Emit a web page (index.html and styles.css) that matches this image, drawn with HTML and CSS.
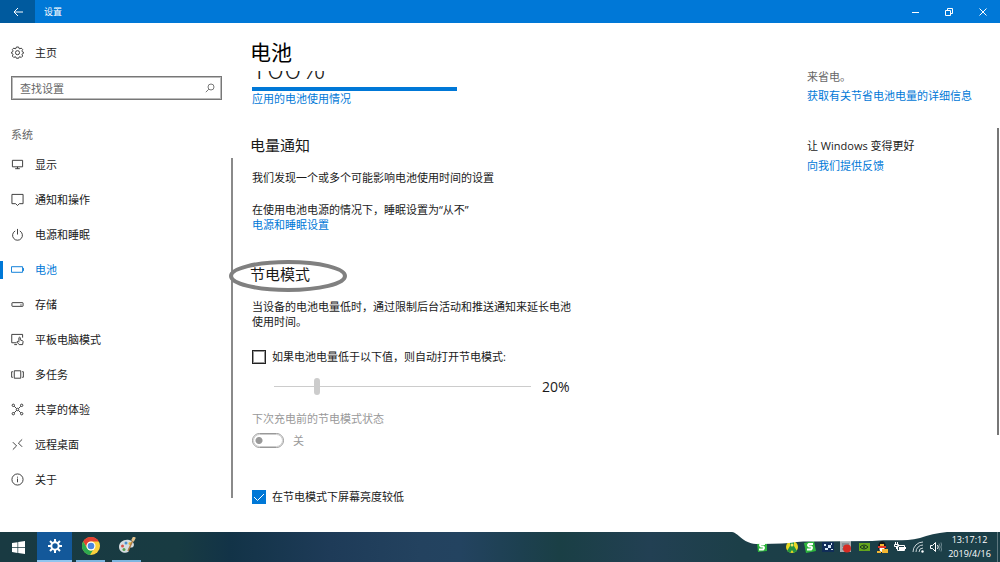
FILE: index.html
```
<!DOCTYPE html>
<html lang="zh-CN">
<head>
    <meta charset="UTF-8">
    <meta name="viewport" content="width=device-width, initial-scale=1.0">
    <title>设置</title>
    <link rel="stylesheet" href="styles.css">
</head>
<body>

<header class="titlebar">
    <button class="back" aria-label="返回">
        <svg width="10" height="10" viewBox="0 0 10 10"><path d="M10 5H1M5 1L1 5l4 4"/></svg>
    </button>
    <span class="window-title">设置</span>
    <button class="window-button" aria-label="最小化">
        <svg width="10" height="10" viewBox="0 0 10 10"><path d="M2 5.500h7"/></svg>
    </button>
    <button class="window-button" aria-label="还原">
        <svg width="10" height="10" viewBox="0 0 10 10"><path d="M1.500 3.500h5v5h-5zM3.500 3.500v-2h5v5h-2"/></svg>
    </button>
    <button class="window-button" aria-label="关闭">
        <svg width="10" height="10" viewBox="0 0 10 10"><path d="M1.500 1.500l7 7M8.500 1.500l-7 7"/></svg>
    </button>
</header>

<div class="window">
    <div class="sidebar">
        <div class="sidebar-body">
            <a class="nav-item home" href="#">
                <svg class="icon" viewBox="0 0 14 14"><path d="M5.800 1.100h2.400l.4 1.500 1 .4 1.400-.8 1.600 1.700-.8 1.300.4 1 1.100.3v1.500l-1.100.4-.4 1 .8 1.400-1.600 1.600-1.400-.8-1 .4-.4 1.200H5.800l-.4-1.200-1-.4-1.400.8-1.600-1.600.8-1.400-.4-1L.7 8V6.500l1.100-.3.4-1-.8-1.300L3 2.200l1.400.8 1-.4z"/><circle cx="7" cy="7.200" r="2.200"/></svg>
                主页
            </a>
            <div class="search">
                <input type="text" placeholder="查找设置" aria-label="查找设置">
                <svg width="10" height="10" viewBox="0 0 10 10"><circle cx="6" cy="4" r="3"/><path d="M3.800 6.200L.8 9.200"/></svg>
            </div>
            <h2 class="group">系统</h2>
            <nav>
                <a class="nav-item" href="#">
                    <svg class="icon" viewBox="0 0 14 14"><path d="M1.500 2.500h11v7h-11zM7 9.500v2M4.500 11.500h5"/></svg>
                    显示
                </a>
                <a class="nav-item" href="#">
                    <svg class="icon" viewBox="0 0 14 14"><path d="M1 1.500h12v10H9l-2 2-2-2H1z"/></svg>
                    通知和操作
                </a>
                <a class="nav-item" href="#">
                    <svg class="icon" viewBox="0 0 14 14"><path d="M4.500 3.200a5.300 5.300 0 1 0 5 0M7 1v6"/></svg>
                    电源和睡眠
                </a>
                <a class="nav-item active" href="#">
                    <svg class="icon" viewBox="0 0 14 14"><path d="M.5 4h12v6H.5zM13.500 5.500v3"/></svg>
                    电池
                </a>
                <a class="nav-item" href="#">
                    <svg class="icon" viewBox="0 0 14 14"><path d="M1.500 5h11q.5 0 .5.500v3q0 .5-.5.500h-11Q1 9 1 8.500v-3Q1 5 1.500 5zM10 7.500h1.500"/></svg>
                    存储
                </a>
                <a class="nav-item" href="#">
                    <svg class="icon" viewBox="0 0 14 14"><path d="M6 10.500H.8v-9h11.700V5M3.500 12.500h3"/><path d="M8.500 9.500V5q.8-1 1.500 0v2.500l2.500.8q.6.4.5 1.200l-.5 3H8.800L6.500 9.800q0-1 1-.8l1 1"/></svg>
                    平板电脑模式
                </a>
                <a class="nav-item" href="#">
                    <svg class="icon" viewBox="0 0 14 14"><path d="M3.500 3h7v8h-7zM2 4H.7v6H2M12 4h1.300v6H12"/></svg>
                    多任务
                </a>
                <a class="nav-item" href="#">
                    <svg class="icon" viewBox="0 0 14 14"><circle cx="2.500" cy="2.500" r="1.300"/><circle cx="11.500" cy="2.500" r="1.300"/><circle cx="2.500" cy="11.500" r="1.300"/><circle cx="11.500" cy="11.500" r="1.300"/><circle cx="7" cy="7" r="1.300"/><path d="M3.500 3.500L6 6M10.500 3.500L8 6M3.500 10.500L6 8M10.500 10.500L8 8"/></svg>
                    共享的体验
                </a>
                <a class="nav-item" href="#">
                    <svg class="icon" viewBox="0 0 14 14"><path d="M2 4.500l4 4-4 4M12 1.500l-4 4 4 4"/></svg>
                    远程桌面
                </a>
                <a class="nav-item" href="#">
                    <svg class="icon" viewBox="0 0 14 14"><circle cx="7" cy="7" r="6"/><path d="M7 6v4M7 4v1"/></svg>
                    关于
                </a>
            </nav>
        </div>
        <div class="sidebar-scroll"></div>
    </div>

    <main class="content">
        <h1>电池</h1>
        <div class="scroll-area">
            <div class="charge">100%</div>
            <div class="charge-bar"></div>
            <a href="#">应用的电池使用情况</a>

            <h2>电量通知</h2>
            <p>我们发现一个或多个可能影响电池使用时间的设置</p>
            <p class="spaced">在使用电池电源的情况下，睡眠设置为“从不”</p>
            <a href="#">电源和睡眠设置</a>

            <h2 class="saver-title">节电模式
                <svg class="marker" viewBox="0 0 120 34"><ellipse cx="60" cy="17" rx="57" ry="14"/></svg>
            </h2>
            <p>当设备的电池电量低时，通过限制后台活动和推送通知来延长电池使用时间。</p>

            <label class="check auto-check"><input type="checkbox">如果电池电量低于以下值，则自动打开节电模式:</label>
            <div class="slider">
                <input type="range" id="level" min="5" max="100" value="20" aria-label="电池电量" disabled>
                <output for="level">20%</output>
            </div>

            <label class="saver-label" for="saver">下次充电前的节电模式状态</label>
            <div class="toggle">
                <input type="checkbox" id="saver" role="switch" disabled>
                <span>关</span>
            </div>

            <label class="check dim-check"><input type="checkbox" checked>在节电模式下屏幕亮度较低</label>
        </div>
    </main>

    <aside class="related">
        <p class="muted">来省电。</p>
        <a href="#">获取有关节省电池电量的详细信息</a>
        <h3>让 Windows 变得更好</h3>
        <a href="#">向我们提供反馈</a>
    </aside>
    <div class="page-scroll"></div>
</div>

<footer class="taskbar">
    <button class="task start" aria-label="开始">
        <svg width="13" height="13" viewBox="0 0 13 13"><path fill="#fff" d="M0 2l5.500-.8v5H0zM6.200 1.100L13 0v6.200H6.200zM0 6.900h5.500v5L0 11.100zM6.200 6.900H13V13l-6.800-1z"/></svg>
    </button>
    <button class="task current" aria-label="设置">
        <svg width="14" height="14" viewBox="0 0 14 14"><circle cx="7" cy="7" r="3.700" fill="none" stroke="#fff" stroke-width="2"/><path stroke="#fff" stroke-width="2" d="M7 0v3M7 11v3M0 7h3M11 7h3M2 2l2.200 2.200M9.800 9.800L12 12M12 2L9.800 4.200M4.200 9.800L2 12"/></svg>
    </button>
    <button class="task running" aria-label="Chrome">
        <svg width="18" height="18" viewBox="0 0 18 18"><circle cx="9" cy="9" r="9" fill="#fbd13d"/><path fill="#e34133" d="M1.200 4.500a9 9 0 0 1 15.600 0H9a4.500 4.500 0 0 0-4 6.500z"/><path fill="#2da94f" d="M1.200 4.500L5.100 11.200A4.500 4.500 0 0 0 11 13l-3 5A9 9 0 0 1 1.200 4.500z"/><circle cx="9" cy="9" r="4.500" fill="#fff"/><circle cx="9" cy="9" r="3.300" fill="#4a86e0"/></svg>
    </button>
    <button class="task running" aria-label="画图">
        <svg width="18" height="18" viewBox="0 0 18 18"><path fill="#d5dce0" d="M1 10C1 5 6 2 11 3c5 1 6 5 4 7-1 1-3 0-4 1s1 3-1 4c-3 2-9 0-9-5z"/><circle cx="4.500" cy="9" r="1.500" fill="#d9534a"/><circle cx="8" cy="6" r="1.500" fill="#4a90d0"/><circle cx="6" cy="12.500" r="1.500" fill="#55a04f"/><circle cx="12" cy="6.500" r="1.500" fill="#e6b83b"/><path stroke="#ad7b45" stroke-width="1.500" d="M10 14l5-11"/><path stroke="#e3c48e" stroke-width="3" d="M14.500 4L16.500 0"/></svg>
    </button>

    <div class="tray">
        <svg class="first" viewBox="0 0 12 12"><path fill="#2db53c" d="M1 2l10-1v9L2 11z"/><path fill="none" stroke="#fff" stroke-width="2" d="M9 3H5q-2 1 0 2.500h2q2 1 0 3H3"/></svg>
        <svg viewBox="0 0 12 12"><circle cx="6" cy="6" r="6" fill="#e9d822"/><path fill="#239342" d="M4 0h4v5l3 5-3 2-2-3-2 3-3-2 3-5z"/><circle cx="6" cy="4" r="1.500" fill="#f1e968"/></svg>
        <svg viewBox="0 0 12 12"><path fill="#2db53c" d="M0 2l10-2 2 10-10 2z"/><path fill="none" stroke="#fff" stroke-width="2" d="M9 3H5q-2 1 0 2.500h2q2 1 0 3H3"/></svg>
        <svg viewBox="0 0 12 12"><path fill="#102d58" d="M0 1h12v10H0z"/><path fill="#d4e7f6" d="M2 3h2v2H2zM6 4h3v3H6zM3 7h3v2H3zM9 2h1v2H9zM9 8h2v1H9z"/></svg>
        <svg viewBox="0 0 12 12"><path fill="#a9afb1" d="M0 0h11v11H0z"/><path stroke="#626d75" d="M2 3h7M2 5h5M2 8h3"/><circle cx="7" cy="7.500" r="4" fill="#d52b23"/></svg>
        <svg viewBox="0 0 12 12"><path fill="#64a51d" d="M1 2h11v8H1z"/><path fill="none" stroke="#17351f" d="M2 6q4-4 8 0-4 4-8 0z"/><circle cx="6" cy="6" r="1" fill="#17351f"/></svg>
        <svg viewBox="0 0 12 12"><ellipse cx="6" cy="6" rx="4" ry="6" fill="#15191b"/><ellipse cx="6" cy="8" rx="2.500" ry="3" fill="#fff"/><path fill="#e73828" d="M2 5h8v2H2z"/><path fill="#f4b731" d="M4 3h4v2H4zM1 10h4v2H1zM6 8h6v4H6z"/></svg>
        <svg viewBox="0 0 12 12"><path fill="none" stroke="#fff" d="M3.500 4.500h7v5h-7zM11.500 6v2M1.500 1v2M3.500 1v2M.5 3.500h4v2h-4zM2.500 5.500V8"/><path fill="#fff" d="M5 6h5v3H5z"/></svg>
        <svg viewBox="0 0 12 12"><path fill="none" stroke="#cbd6d9" d="M1 11A10 10 0 0 1 11 1M4 11a7 7 0 0 1 7-7M7 11a4 4 0 0 1 4-4"/><circle cx="10.500" cy="10.500" r="1.200" fill="#fff"/></svg>
        <svg viewBox="0 0 12 12"><path fill="none" stroke="#fff" d="M.5 4.500h2l3-3v9l-3-3h-2zM7.500 4q1.500 2 0 4"/><path fill="none" stroke="#6f8a91" d="M9 2.500q2.500 3.500 0 7M11 1.500q2 4.500 0 9"/></svg>
    </div>
    <div class="clock"><time>13:17:12</time><time>2019/4/16</time></div>
    <div class="show-desktop"></div>

    <svg class="paint" viewBox="0 0 215 13"><path d="M0 0C7 1 10 11 24 12L50 11.500C62 11 64 9 80 9.500L140 9C155 7 172 10 188 6 196 3 205 1 215 0z"/></svg>
</footer>

</body>
</html>
```
FILE: styles.css
```
* {
    box-sizing: border-box;
}

body {
    display: flex;
    flex-direction: column;
    height: 100vh;
    margin: 0;
    overflow: hidden;
    background-color: #fff;
    color: #1a1a1a;
    font-family: "Open Sans", "Noto Sans CJK SC", sans-serif;
    font-size: 11px;
    line-height: 15px;
}

h1, h2, h3, p {
    margin: 0;
    font-weight: normal;
}

a {
    color: #0078d7;
    text-decoration: none;
}

button {
    display: flex;
    align-items: center;
    justify-content: center;
    padding: 0;
    border: 0;
    background: none;
}

input {
    margin: 0;
    font: inherit;
}

/* title bar */
.titlebar {
    display: flex;
    flex: none;
    height: 23px;
    background-color: #0078d7;
    color: #fff;
}

.titlebar svg {
    fill: none;
    stroke: #fff;
}

.back {
    width: 35px;
    background-color: #005a9e;
}

.window-title {
    flex: 1;
    padding-left: 9px;
    font-size: 9px;
    line-height: 23px;
}

.window-button {
    width: 34px;
}

.window {
    display: flex;
    flex: 1;
    min-height: 0;
}

/* sidebar */
.sidebar {
    display: flex;
    flex: none;
    width: 233px;
}

.sidebar-body {
    flex: 1;
    padding-top: 12px;
}

.sidebar-scroll {
    width: 2px;
    margin: 135px 0 34px;
    background-color: #8a8a8a;
}

.nav-item {
    display: flex;
    align-items: center;
    gap: 11px;
    height: 35px;
    padding-left: 11px;
    color: #1a1a1a;
}

.icon {
    width: 13px;
    height: 13px;
    fill: none;
    stroke: #333;
}

.active {
    background: linear-gradient(#0078d7, #0078d7) left center / 3px 18px no-repeat;
    color: #0078d7;
}

.active .icon {
    stroke: #0078d7;
}

.search {
    display: flex;
    align-items: center;
    height: 24px;
    margin: 6px 9px 0 11px;
    padding: 0 6px 0 8px;
    border: 1px solid #777;
    outline: 1px solid #bbb;
    outline-offset: -2px;
}

.search input {
    flex: 1;
    min-width: 0;
    padding: 0;
    border: 0;
    outline: 0;
    background: none;
}

.search input::placeholder {
    color: #666;
}

.search svg {
    fill: none;
    stroke: #777;
}

.group {
    margin: 27px 0 5px;
    padding-left: 11px;
    color: #666;
    font-size: 11px;
}

/* battery page */
.content {
    display: flex;
    flex: 1;
    flex-direction: column;
    min-width: 0;
    padding: 16px 0 0 19px;
}

.content h1,
.content h2,
.charge {
    margin-left: -2px;
}

.content h1 {
    height: 32px;
    color: #000;
    font-size: 21px;
    line-height: 26px;
}

.scroll-area {
    flex: 1;
    min-height: 0;
}

.scroll-area > p {
    max-width: 324px;
}

.scroll-area > a,
.saver-label {
    display: block;
    width: fit-content;
}

/* scrolled halfway under the page title */
.charge {
    display: flex;
    align-items: flex-end;
    height: 16px;
    overflow: hidden;
    font-size: 30px;
    font-weight: 300;
    line-height: 38px;
}

.charge-bar {
    width: 205px;
    height: 4px;
    background-color: #0078d7;
}

.content h2 {
    margin-top: 29px;
    margin-bottom: 15px;
    font-size: 15px;
    line-height: 20px;
}

.content .spaced {
    margin-top: 17px;
}

.content .saver-title {
    position: relative;
    width: fit-content;
    margin-top: 32px;
}

/* pen ring drawn around the heading */
.marker {
    position: absolute;
    top: -5px;
    left: -22px;
    width: 120px;
    height: 34px;
    fill: none;
    stroke: #808080;
    stroke-width: 4;
}

.check {
    display: flex;
    align-items: center;
    gap: 6px;
    width: fit-content;
}

.check input {
    appearance: none;
    width: 14px;
    height: 14px;
    border: 1px solid #222;
    outline: 1px solid #999;
    outline-offset: -2px;
}

.check input:checked {
    border: 0;
    outline: 0;
    background: #0078d7 url("data:image/svg+xml,%3Csvg xmlns='http://www.w3.org/2000/svg' viewBox='0 0 14 14'%3E%3Cpath d='M2 7l3.500 3.500L12 4' fill='none' stroke='white'/%3E%3C/svg%3E");
}

.auto-check {
    margin-top: 20px;
}

.slider {
    display: flex;
    align-items: center;
    gap: 11px;
    height: 20px;
    margin: 12px 0 15px 22px;
}

.slider input {
    appearance: none;
    width: 257px;
    height: 17px;
    background: linear-gradient(#ccc, #ccc) center / 100% 1px no-repeat;
}

.slider input::-webkit-slider-thumb {
    appearance: none;
    width: 6px;
    height: 17px;
    border-radius: 3px;
    background-color: #ccc;
}

.slider output {
    font-size: 14px;
}

.saver-label,
.toggle {
    color: #999;
}

.toggle {
    display: flex;
    align-items: center;
    gap: 9px;
    margin: 7px 0 41px;
}

.toggle input {
    appearance: none;
    width: 32px;
    height: 15px;
    border: 1px solid #999;
    border-radius: 8px;
    outline: 1px solid #ccc;
    outline-offset: -2px;
    background: radial-gradient(circle at 6px center, #999 3px, transparent 4px);
}

/* related links */
.related {
    flex: none;
    width: 190px;
    padding-top: 46px;
}

.related a {
    display: block;
}

.muted {
    margin-bottom: 4px;
    color: #666;
}

.related h3 {
    margin: 35px 0 5px;
    font-size: 11px;
}

.page-scroll {
    width: 2px;
    margin: 105px 1px 97px 0;
    background-color: #777;
}

/* taskbar */
.taskbar {
    position: relative;
    display: flex;
    flex: none;
    height: 30px;
    background: linear-gradient(90deg, #193a42, #183b42 18%, #123347 23%, #1e3b58 33%, #23425f 42%, #234360 46%, #1d4050 52%, #1a3f45 56%, #224053 65%, #1c3f48 74%, #1b3f48);
    color: #fff;
}

.task {
    width: 35px;
}

.start {
    width: 37px;
}

.current {
    border-bottom: 2px solid #91c5ef;
    background-color: #13589a;
}

.running {
    width: 29px;
    margin-left: 4px;
    border-bottom: 2px solid #7db6e0;
}

.running + .running {
    margin-left: 7px;
}

/* white brush stroke over the top edge */
.paint {
    position: absolute;
    top: 0;
    right: 53px;
    width: 215px;
    height: 13px;
    fill: #fff;
}

.tray {
    display: flex;
    align-items: center;
    gap: 6px;
    margin-left: auto;
}

.tray svg {
    width: 12px;
    height: 12px;
}

.tray .first {
    margin-right: 12px;
}

.clock {
    display: flex;
    flex-direction: column;
    justify-content: center;
    width: 55px;
    font-size: 9px;
    line-height: 14px;
    text-align: center;
}

.show-desktop {
    width: 3px;
    border-left: 1px solid #5d777e;
}
```
